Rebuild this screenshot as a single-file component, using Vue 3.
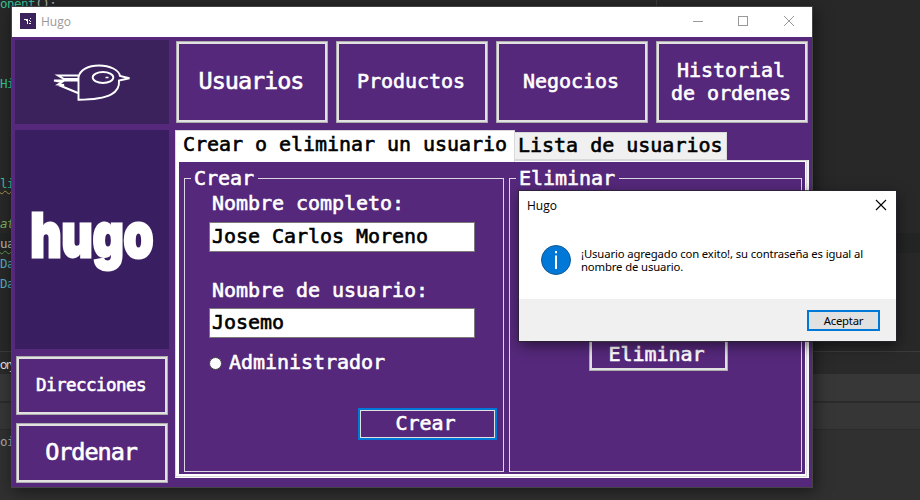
<script setup>
const codeLines = [
  { text: 'onent', tail: '();', tone: 'teal' },
  {}, {}, {},
  { text: 'Hi', tone: 'teal' },
  {}, {}, {}, {},
  { text: 'li', tone: 'teal', wave: 'yellow' },
  {},
  { text: 'at', tone: 'green' },
  { text: 'ua', tone: 'plain', wave: 'lime', current: true },
  { text: 'Da', tone: 'blue' },
  { text: 'Da', tone: 'blue' },
  {}, {},
]
const sections = [
  { lines: ['Usuarios'], large: true },
  { lines: ['Productos'] },
  { lines: ['Negocios'] },
  { lines: ['Historial', 'de ordenes'] },
]
</script>

<template>
  <div class="desktop">
    <div class="editor">
      <div class="code">
        <div v-for="(l, i) in codeLines" :key="i" class="line" :class="{ current: l.current }">
          <span v-if="l.text" class="token" :class="[l.tone, l.wave && 'wave-' + l.wave]">{{ l.text }}</span><span v-if="l.tail" class="plain">{{ l.tail }}</span>
        </div>
      </div>
      <div class="strip tabs-strip">ory</div>
      <div class="strip bar-a"></div>
      <div class="strip bar-b"></div>
      <div class="strip out">oi</div>
    </div>
    <div class="guide"></div>

    <div class="window">
      <header class="titlebar">
        <svg class="app-icon" width="16" height="16" viewBox="0 0 16 16">
          <rect width="16" height="16" fill="#3b225c" />
          <path d="M4 6h4v1h-4zM6 7h1v1h-1zM7 7h1v4h-1zM10 5h1v1h-1zM9 7h1v1h-1zM11 8h-1v1h1zM10 10h1v1h-1zM9 10h1v1h-1z" fill="#fff" />
        </svg>
        <span class="title">Hugo</span>
        <svg class="controls" width="104" height="12" viewBox="0 0 104 12" fill="none" stroke="#999" shape-rendering="crispEdges">
          <path d="M0 6.5h10M45.500 1.500h9v9h-9z" />
          <path d="M91 1l10 10M101 1l-10 10" shape-rendering="auto" />
        </svg>
      </header>

      <div class="body">
        <aside class="side">
          <div class="bird">
            <svg width="78" height="38" viewBox="0 0 78 38" fill="none" stroke="#fff" stroke-width="1.900" stroke-linejoin="miter">
              <path d="M25.500 35.700V13C27 6 35 1.500 46 1.500C57 1.500 66 6 67 12L76.500 14.200L66 16.500C67 28 58 35.500 25.500 35.700Z" />
              <path d="M25 11.500H5L11 15H25M25 16.500H1L9 18L5 20.500L11 21L8 22L25 29" />
              <ellipse cx="50" cy="13.500" rx="10.300" ry="5.500" />
              <path d="M52.500 13.500h3" stroke-width="1.500" />
            </svg>
          </div>
          <div class="brand">
            <svg width="154" height="219" viewBox="0 0 154 219">
              <text class="wordmark" x="15.500" y="127" textLength="123" lengthAdjust="spacingAndGlyphs">hugo</text>
            </svg>
          </div>
          <button class="btn small direc">Direcciones</button>
          <button class="btn large orden">Ordenar</button>
        </aside>

        <main class="main">
          <nav class="sections">
            <button v-for="s in sections" :key="s.lines[0]" class="btn" :class="{ large: s.large, double: s.lines.length > 1 }">
              <span v-for="t in s.lines" :key="t">{{ t }}</span>
            </button>
          </nav>
          <div class="tabs">
            <div class="tab active">Crear o eliminar un usuario</div>
            <div class="tab">Lista de usuarios</div>
          </div>
          <div class="pane">
            <div class="pane-inner">
              <section class="group create">
                <h2 class="legend">Crear</h2>
                <div class="form">
                  <label class="lbl">Nombre completo:</label>
                  <div class="input">Jose Carlos Moreno</div>
                  <label class="lbl second">Nombre de usuario:</label>
                  <div class="input">Josemo</div>
                  <div class="radio"><i class="dot"></i><span>Administrador</span></div>
                  <button class="btn focus">Crear</button>
                </div>
              </section>
              <section class="group remove">
                <h2 class="legend">Eliminar</h2>
                <button class="btn del">Eliminar</button>
              </section>
            </div>
          </div>
        </main>
      </div>
    </div>

    <div class="dialog">
      <div class="dlg-head">
        <span class="dlg-title">Hugo</span>
        <svg width="12" height="12" viewBox="0 0 12 12" stroke="#000" stroke-width="1.100"><path d="M1 1l10 10M11 1L1 11" /></svg>
      </div>
      <div class="dlg-body">
        <svg width="30" height="30" viewBox="0 0 30 30">
          <circle cx="15" cy="15" r="14.500" fill="#0078d7" stroke="#135a96" />
          <path d="M14 6h2v2.300h-2zM14 10.500h2v13.500h-2z" fill="#fff" />
        </svg>
        <p class="msg">¡Usuario agregado con exito!, su contraseña es igual al<br>nombre de usuario.</p>
      </div>
      <div class="dlg-foot"><button class="ok">Aceptar</button></div>
    </div>
  </div>
</template>

<style>
body { margin: 0; overflow: hidden; background: #282828; }
</style>

<style scoped>
* { box-sizing: border-box; }
.desktop { position: relative; width: 920px; height: 500px; overflow: hidden; background: #282828; }
.editor { font: 12.5px/20px "DejaVu Sans Mono", monospace; letter-spacing: -0.500px; color: #c8c8c8; }
.code { margin-top: -7px; height: 358px; }
.line { height: 20px; white-space: nowrap; line-height: 21px; }
.line.current { background: #232525; }
.teal { color: #35c39a; }
.blue { color: #56a8c4; }
.green { color: #7cb45c; font-style: italic; }
.plain { color: #b8b8b8; }
.wave-yellow { text-decoration: underline wavy #a89a4a 1px; text-underline-offset: 2px; }
.wave-lime { text-decoration: underline wavy #5d9a48 1px; text-underline-offset: 2px; }
.tabs-strip { height: 23px; border-top: 1px solid #3b3b3b; background: #2a2a2a; font: 12px/25px "Open Sans", sans-serif; letter-spacing: -1.200px; color: #f2f2f2; }
.bar-a { height: 29px; background: #373737; border-bottom: 2px solid #2b2b2b; }
.bar-b { height: 26px; background: #363636; }
.out { height: 71px; background: #303030; border-top: 1px solid #2b2b2b; padding-top: 2px; color: #aaa; }
.guide { position: absolute; left: 656px; top: 0; width: 1px; height: 7px; background: #3a3a3a; }

.window { position: absolute; left: 11px; top: 6px; width: 802px; height: 482px; border: 1px solid #444; background: #55287b; display: flex; flex-direction: column; box-shadow: 2px 3px 14px rgba(0,0,0,.5); }
.titlebar { height: 30px; flex: none; background: #fff; display: flex; align-items: center; padding: 0 15px 0 8px; }
.title { margin: -1px 0 0 5px; font: 12px "Open Sans", sans-serif; color: #999; flex: 1; }
.app-icon { margin-top: -2px; }
.controls { margin-top: -2px; }
.body { flex: 1; display: flex; }
.side { width: 163px; flex: none; padding: 3px 0 0 3px; display: flex; flex-direction: column; }
.bird { width: 154px; height: 84px; background: #3b225c; padding: 24px 0 0 38px; }
.bird svg, .brand svg { display: block; }
.brand { width: 154px; height: 219px; margin-top: 6px; background: #391e61; }
.wordmark { font: 900 61px "Inter", sans-serif; fill: #fff; stroke: #fff; stroke-width: 3px; }
.btn { margin: 0; padding: 0 2px 2px 0; background: #55287b; color: #fff; display: flex; flex-direction: column; align-items: center; justify-content: center; font: 20px/23px "DejaVu Sans Mono", monospace; letter-spacing: -0.040px; -webkit-text-stroke: 0.600px; border: 2px solid #e1e1e1; outline: 1px solid #adadad; outline-offset: 0; }
.btn.large { font-size: 23.500px; letter-spacing: -1.050px; padding: 0 2px 1px 0; }
.btn.small { font-size: 17.500px; letter-spacing: -0.530px; padding: 0 2px 1px 0; }
.btn.double { padding-bottom: 0; }
.side .btn { width: 150px; margin-left: 2px; }
.direc { height: 57px; margin-top: 8px; }
.orden { height: 58px; margin-top: 10px; }
.main { width: 634px; padding-top: 4px; }
.sections { display: flex; gap: 10px; padding-left: 2px; }
.sections .btn { width: 150px; height: 80px; margin-top: 1px; }
.tabs { display: flex; height: 30px; margin-top: 8px; align-items: flex-end; }
.tab { height: 28px; width: 213px; margin-left: -1px; border: 1px solid #d9d9d9; background: #f0f0f0; color: #000; font: 20px/24px "DejaVu Sans Mono", monospace; letter-spacing: -0.010px; -webkit-text-stroke: 0.600px; padding-left: 3px; white-space: nowrap; }
.tab.active { height: 32px; width: 340px; margin: 0 0 -2px; background: #fff; border-bottom: 0; padding-left: 7px; line-height: 26px; letter-spacing: -0.040px; position: relative; z-index: 1; }
.pane { height: 318px; border: 1px solid #d9d9d9; border-right: 2px solid #f5f5f5; border-bottom: 1px solid #fff; background: #d9d9d9; padding: 0 1px 1px 0; }
.pane-inner { height: 315px; background: #55287b; border: solid #fff; border-width: 1px 1px 2px 3px; display: flex; padding: 16px 3px 2px 5px; gap: 5px; }
.group { border: 1px solid #dcd6e2; height: 294px; }
.create { width: 320px; }
.remove { width: 293px; }
.legend { margin: -13px 0 0 6px; padding: 0 4px 0 3px; width: max-content; height: 25px; background: #55287b; color: #fff; font: 20px/24px "DejaVu Sans Mono", monospace; letter-spacing: -0.040px; -webkit-text-stroke: 0.600px; }
.form { padding-left: 24px; color: #fff; font: 20px/26px "DejaVu Sans Mono", monospace; letter-spacing: -0.040px; -webkit-text-stroke: 0.600px; }
.lbl { display: block; height: 31px; padding-left: 3px; line-height: 25px; }
.lbl.second { margin-top: 26px; height: 30px; }
.input { width: 266px; height: 30px; border: 1px solid #7a7a7a; background: #fff; color: #000; padding-left: 2px; line-height: 26px; }
.radio { display: flex; align-items: center; height: 26px; margin-top: 12px; gap: 7px; }
.radio span { padding-bottom: 2px; }
.dot { width: 13px; height: 13px; border-radius: 50%; border: 1px solid #444; background: #fff; }
.btn.focus { width: 135px; height: 28px; margin: 34px 0 0 151px; border: 1px solid #e1e1e1; outline: 2px solid #0078d7; padding: 0 4px 2px 0; }
.btn.del { width: 137px; height: 30px; margin: 149px 0 0 80px; padding: 0 4px 2px 0; }

.dialog { position: absolute; left: 519px; top: 191px; width: 377px; height: 150px; background: #fff; color: #000; outline: 1px solid rgba(40,35,45,.8); box-shadow: 1px 4px 13px rgba(0,0,0,.55); display: flex; flex-direction: column; }
.dlg-head { height: 30px; padding: 0 9px 2px 8px; display: flex; align-items: center; justify-content: space-between; }
.dlg-title { font: 12px "Open Sans", sans-serif; padding-top: 1px; }
.dlg-body { flex: 1; display: flex; padding: 24px 0 0 22px; gap: 10px; }
.msg { margin: 2px 0 0; font: 11.300px/13px "Noto Sans", sans-serif; letter-spacing: -0.130px; white-space: nowrap; }
.dlg-foot { height: 42px; background: #f0f0f0; display: flex; justify-content: flex-end; padding: 11px 16px 0 0; }
.ok { width: 73px; height: 21px; padding: 0; border: 2px solid #0078d7; background: #e1e1e1; font: 11.300px/16px "Noto Sans", sans-serif; letter-spacing: -0.200px; color: #000; }
</style>
